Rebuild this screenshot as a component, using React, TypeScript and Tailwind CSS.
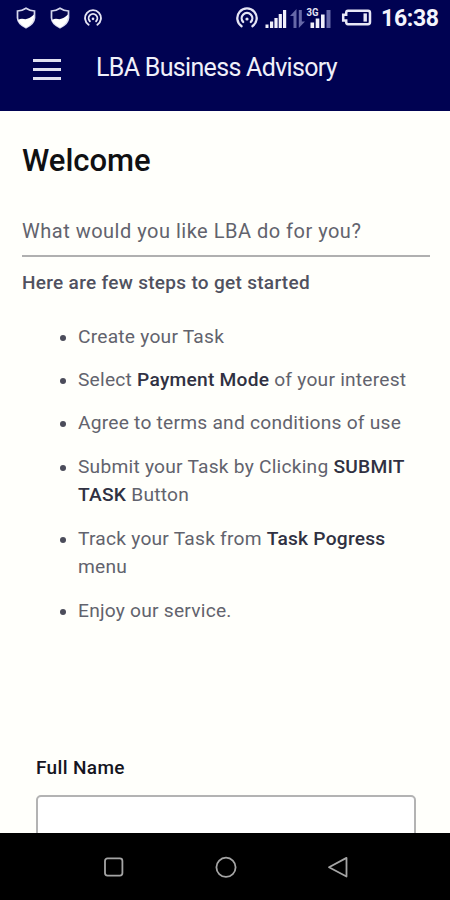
import type { ReactNode } from "react";

function Shield() {
  return (
    <svg width="20" height="22" viewBox="0 0 20 22">
      <path d="M10 1.2 Q6 3.8 1.5 4 V11 Q2 17.2 10 20.6 Q18 17.2 18.5 11 V4 Q14 3.8 10 1.2Z" fill="#05054f" stroke="#d6d8ee" strokeWidth="1.7" />
      <path d="M2 13 Q5 11 8 12 Q12 13 18 7.5 V11 Q17.5 17 10 20.4 Q3 17 2 13Z" fill="#fff" />
    </svg>
  );
}

function Hotspot({ size }: { size: number }) {
  return (
    <svg width={size} height={size} viewBox="0 0 22 22" fill="none" stroke="#e4e4f4" strokeWidth="2.3" strokeLinecap="round">
      <path d="M5.6 19.2 A9.7 9.7 0 1 1 16.4 19.2" />
      <path d="M7.2 15 A5.3 5.3 0 1 1 14.8 15" />
      <circle cx="11" cy="12" r="1.6" fill="#e4e4f4" stroke="none" />
    </svg>
  );
}

function Signals() {
  return (
    <svg width="68" height="22" viewBox="0 0 68 22">
      <g fill="#f0f0fa">
        <rect x="0.5" y="17.5" width="3" height="3.5" />
        <rect x="5" y="14.5" width="3.2" height="6.5" />
        <rect x="9.4" y="11" width="3.2" height="10" />
        <rect x="13.7" y="7" width="3.2" height="14" />
        <rect x="18" y="3" width="3.2" height="18" />
        <rect x="45.5" y="15.5" width="3.6" height="5.5" />
        <rect x="50.7" y="11.5" width="3.6" height="9.5" />
        <rect x="56" y="7.5" width="3.6" height="13.5" />
      </g>
      <g fill="#6668a8">
        <rect x="61.5" y="3" width="4" height="18" />
        <path d="M31.5 21 V2 L25 9 H28.5 V21Z" />
        <path d="M33.8 3 V21 L40 14.5 H36.8 V3Z" />
      </g>
      <text x="41.5" y="8.8" fontSize="10" fontWeight="700" textLength="12" lengthAdjust="spacingAndGlyphs" fill="#e4e4f4" fontFamily="Roboto, sans-serif">3G</text>
    </svg>
  );
}

function Battery() {
  return (
    <svg width="32" height="20" viewBox="0 0 32 20">
      <path d="M7 2.8 H27 Q29 2.8 29 5 V14 Q29 16.2 27 16.2 H7 Q5.2 16.2 5.2 14 V12.4 H2.2 V6.8 H5.2 V5 Q5.2 2.8 7 2.8Z" fill="none" stroke="#e8e8f6" strokeWidth="2.5" />
      <rect x="22.5" y="5.4" width="3.4" height="8.2" fill="#e8e8f6" />
    </svg>
  );
}

function Step({ children }: { children: ReactNode }) {
  return (
    <li className="relative mb-[14.4px] before:absolute before:-left-[18px] before:top-[12px] before:size-[6px] before:rounded-full before:bg-[#4b4c5a]">
      {children}
    </li>
  );
}

export default function App() {
  return (
    <div className="flex h-[900px] w-[450px] flex-col overflow-hidden bg-[#fffffb] font-['Roboto',sans-serif]">
      {/* Status bar and app header */}
      <header className="h-[111px] shrink-0 bg-[#000252] text-white">
        <div className="flex h-9 items-center pl-4">
          <Shield />
          <div className="ml-[14px]"><Shield /></div>
          <div className="ml-[14px]"><Hotspot size={18} /></div>
          <div className="ml-[134px]"><Hotspot size={22} /></div>
          <div className="ml-[7px]"><Signals /></div>
          <div className="ml-[8px]"><Battery /></div>
          <span className="ml-[8px] mt-[2px] text-[23px] font-bold leading-9 tracking-[-0.3px] text-[#f4f4fc]">16:38</span>
        </div>
        <div className="flex h-16 items-center pl-[33px]">
          <button aria-label="Menu" className="mt-[3px] flex w-7 flex-col gap-[6px]">
            <span className="h-[3px] bg-[#e0e0f0]" />
            <span className="h-[3px] bg-[#e0e0f0]" />
            <span className="h-[3px] bg-[#e0e0f0]" />
          </button>
          <h1 className="ml-[35px] whitespace-nowrap text-[25px] tracking-[-0.68px] text-[#f0f0fa]">LBA Business Advisory</h1>
        </div>
      </header>

      {/* Page */}
      <main className="min-h-0 flex-1 overflow-hidden pl-[22px] pr-5 text-[#62636d]">
        <h2 className="mt-[32px] text-[31px] font-medium leading-9 text-[#101012]">Welcome</h2>
        <p className="mt-[33px] h-[45px] border-b-2 border-[#b0b0b0] pt-[4px] text-[20px] leading-[30px] tracking-[0.5px]">
          What would you like LBA do for you?
        </p>
        <p className="mt-[11px] text-[19px] font-medium leading-[29px] tracking-[0.3px] text-[#50515f]">Here are few steps to get started</p>
        <ul className="mt-[26px] pl-14 text-[19.2px] leading-[28.8px] tracking-[0.23px] [&_b]:font-medium [&_b]:text-[#303142]">
          <Step>Create your Task</Step>
          <Step>Select <b>Payment Mode</b> of your interest</Step>
          <Step>Agree to terms and conditions of use</Step>
          <Step>Submit your Task by Clicking <b>SUBMIT</b> <b>TASK</b> Button</Step>
          <Step>Track your Task from <b>Task Pogress</b> menu</Step>
          <Step>Enjoy our service.</Step>
        </ul>
        <div className="mt-[129px] px-[14px]">
          <label htmlFor="fullName" className="block text-[19px] font-medium leading-7 tracking-[0.35px] text-[#15151f]">Full Name</label>
          <input id="fullName" className="mt-[13px] block h-14 w-full rounded-[5px] border-2 border-[#b3b3b3] bg-white px-3" />
        </div>
      </main>

      {/* System navigation */}
      <nav className="flex h-[67px] shrink-0 items-center justify-between bg-black pl-[103px] pr-[101px]">
        <svg width="22" height="22" viewBox="0 0 22 22" fill="none" stroke="#a5a5a5" strokeWidth="1.8">
          <rect x="2" y="2.4" width="17.4" height="17.2" rx="2.5" />
        </svg>
        <svg width="22" height="22" viewBox="0 0 22 22" fill="none" stroke="#a5a5a5" strokeWidth="1.8">
          <circle cx="11" cy="11.3" r="9.6" />
        </svg>
        <svg width="22" height="22" viewBox="0 0 22 22" fill="none" stroke="#a5a5a5" strokeWidth="1.8" strokeLinejoin="round">
          <path d="M19.5 1.9 V20.5 L2 11.2Z" />
        </svg>
      </nav>
    </div>
  );
}
